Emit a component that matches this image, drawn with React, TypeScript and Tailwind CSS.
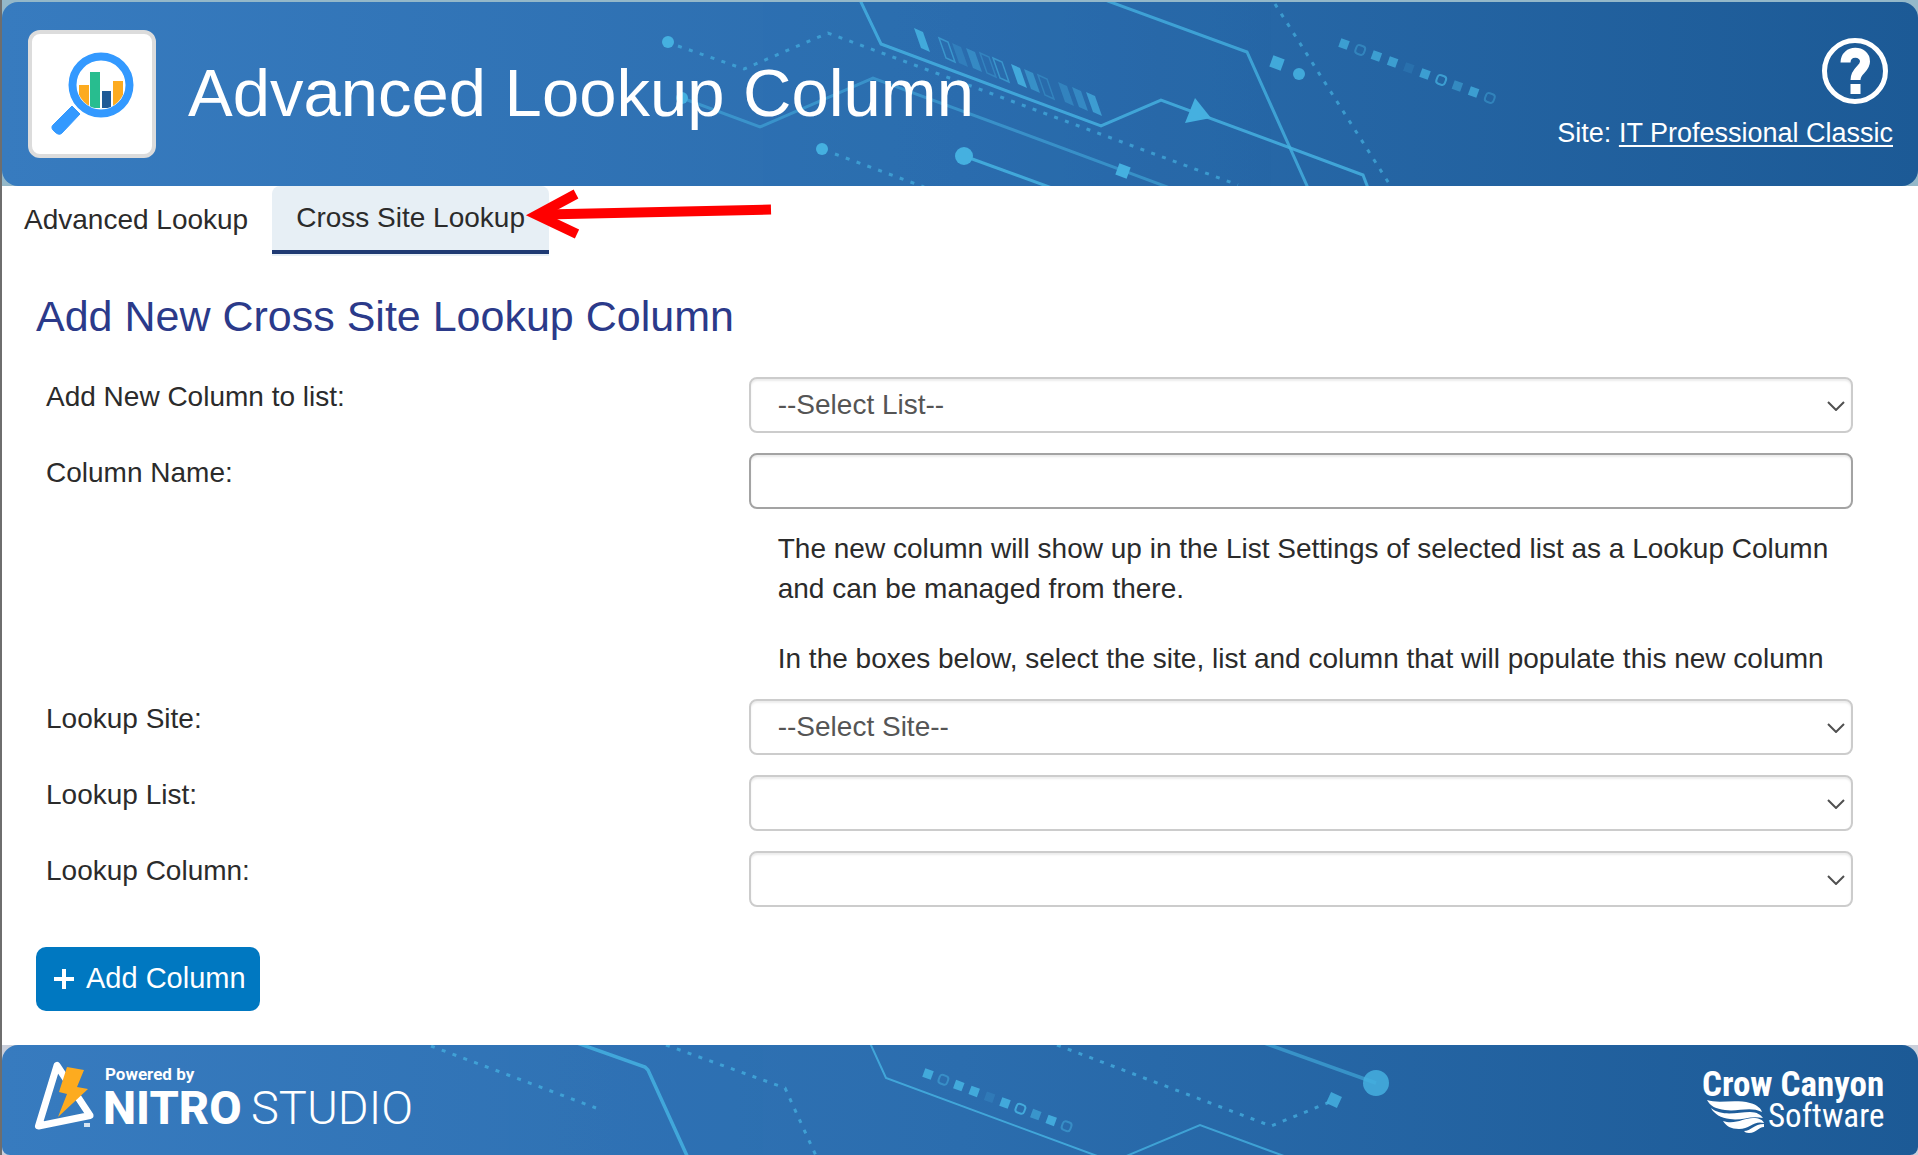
import { ReactNode } from "react";

const ACCENT = "#45b0e0";

// filled / outlined / faint blocks in the circuit drawing
const CHIPS = [1, 0, 1, 1, 2, 1, 0, 3, 1, 0];

function Chips({ x, y, dx, dy }: { x: number; y: number; dx: number; dy: number }) {
  return (
    <g>
      {CHIPS.map((kind, i) => (
        <rect
          key={i}
          x={-4.5}
          y={-4.5}
          width={9}
          height={9}
          rx={kind === 0 ? 3 : 0}
          transform={`translate(${x + i * dx} ${y + i * dy}) rotate(20)`}
          fill={kind === 0 ? "none" : ACCENT}
          stroke={kind === 0 ? ACCENT : "none"}
          strokeWidth={2}
          opacity={kind === 2 ? 0.2 : kind === 3 ? 0.6 : i === 1 || i === 9 ? 0.5 : 0.9}
        />
      ))}
    </g>
  );
}

const BARS = [
  [914, 28, 1],
  [939, 38, 0],
  [952, 43, 0.3],
  [966, 48, 0.5],
  [980, 53, -1],
  [993, 58, 0],
  [1011, 64, 1],
  [1024, 69, 0.6],
  [1038, 75, -1],
  [1058, 82, 0.4],
  [1072, 87, 0.5],
  [1086, 92, 0.8],
];

function HeaderArt() {
  return (
    <svg
      className="absolute inset-0 w-full h-full"
      viewBox="2 2 1916 184"
      preserveAspectRatio="xMidYMid slice"
      fill="none"
      stroke={ACCENT}
      strokeWidth={3}
      aria-hidden="true"
    >
      <path d="M860 0 881 44 1101 126 1161 100 1363 175 1368 188" opacity={0.85} />
      <path d="M1105 0 1247 52 1308 188" opacity={0.8} />
      <path d="M682 98 760 127 873 78 1170 188" opacity={0.55} />
      <path d="M964 156 1052 188" opacity={0.9} />
      <g strokeWidth={3} strokeDasharray="4 7.5" opacity={0.7}>
        <path d="M678 46 744 69 828 33 1238 185" />
        <path d="M835 154 924 187" />
        <path d="M1275 4 1390 185" />
      </g>
      {BARS.map(([x, y, o]) => (
        <path
          key={x}
          d={`M${x} ${y} l9 4 7 20 -9 -4z`}
          fill={o > 0 ? ACCENT : "none"}
          stroke={o > 0 ? "none" : ACCENT}
          strokeWidth={1.5}
          opacity={o > 0 ? o * 0.9 : o === 0 ? 0.6 : 0.35}
        />
      ))}
      <g fill={ACCENT} stroke="none">
        <circle cx={668} cy={42} r={6} />
        <circle cx={682} cy={98} r={6} />
        <circle cx={822} cy={149} r={6} />
        <circle cx={964} cy={156} r={9} />
        <circle cx={1299} cy={74} r={6} opacity={0.9} />
        <path d="M1195 98 1211 118 1185 123z" />
        <rect x={-6} y={-6} width={12} height={12} transform="translate(1123 171) rotate(20)" />
        <rect x={-6} y={-6} width={12} height={12} transform="translate(1277 63) rotate(20)" opacity={0.9} />
      </g>
      <g opacity={0.85}>
        <Chips x={1344} y={44} dx={16.2} dy={6} />
      </g>
    </svg>
  );
}

function FooterArt() {
  return (
    <svg
      className="absolute inset-0 w-full h-full"
      viewBox="2 1045 1916 110"
      preserveAspectRatio="xMidYMid slice"
      fill="none"
      stroke={ACCENT}
      strokeWidth={2}
      aria-hidden="true"
    >
      <path d="M577 1043 645 1067 648 1070 688 1158" strokeWidth={3.5} opacity={0.85} />
      <path d="M870 1043 886 1078 1100 1157" opacity={0.85} />
      <path d="M1124 1157 1200 1125 1284 1156" opacity={0.8} />
      <path d="M1264 1043 1376 1083" strokeWidth={3.5} opacity={0.6} />
      <g strokeWidth={3} strokeDasharray="4 7.5" opacity={0.75}>
        <path d="M431 1046 596 1108" />
        <path d="M666 1045 785 1088 817 1158" />
        <path d="M1057 1045 1271 1126 1330 1102" />
      </g>
      <g fill={ACCENT} stroke="none" opacity={0.85}>
        <circle cx={1376} cy={1083} r={13} />
        <rect x={-6} y={-6} width={12} height={12} transform="translate(1334 1100) rotate(25)" />
      </g>
      <Chips x={928} y={1074} dx={15.4} dy={5.8} />
    </svg>
  );
}

function AppIcon() {
  return (
    <div className="w-32 h-32 shrink-0 rounded-xl bg-white border-4 border-[#dcdcdc] flex items-center justify-center">
      <svg viewBox="28 30 128 128" className="w-32 h-32 shrink-0" aria-hidden="true">
        <defs>
          <clipPath id="lens">
            <circle cx={101} cy={85} r={24} />
          </clipPath>
        </defs>
        <g clipPath="url(#lens)">
          <rect x={79} y={85} width={10} height={30} fill="#fdab1f" />
          <rect x={90} y={72} width={10} height={36} fill="#28bd8f" />
          <rect x={102} y={91} width={9} height={17} fill="#1f5a96" />
          <rect x={113} y={81} width={10} height={30} fill="#fdab1f" />
        </g>
        <circle cx={101} cy={85} r={28.5} fill="none" stroke="#3399ff" strokeWidth={8} />
        <path d="M72 106 80 114 62 133Q59 136 55 132 50 128 53 125z" fill="#3399ff" stroke="#3399ff" strokeWidth={1} />
      </svg>
    </div>
  );
}

function HelpIcon() {
  return (
    <svg viewBox="0 0 68 68" className="w-17 h-17" fill="none" stroke="white" aria-hidden="true">
      <circle cx={34} cy={34} r={30.5} strokeWidth={5} />
      <path d="M24.5 25.5C24.5 12.5 44 13 44 24.5 44 32.5 34.5 33 34.5 43" strokeWidth={10} />
      <path d="M34.5 47V57" strokeWidth={10} />
    </svg>
  );
}

function NitroLogo() {
  return (
    <svg viewBox="32 1059 392 90" className="w-[392px] h-[90px]" role="img" aria-label="Powered by Nitro Studio">
      <path d="M57 1065.5 38.5 1126 90 1115.5z" fill="none" stroke="white" strokeWidth={7} strokeLinejoin="round" />
      <path d="M67 1067 84 1070 77 1087 88 1089 58 1117 67 1094 59 1092z" fill="#fdab1f" />
      <rect x={84} y={1123} width={6} height={4} fill="white" opacity={0.8} />
      <text x={105} y={1080} fontSize={17} fontWeight={700} fill="white" fontFamily="Roboto, sans-serif">
        Powered by
      </text>
      <text x={103} y={1124} fontSize={47} fontWeight={800} fill="white" fontFamily="Roboto, sans-serif">
        NITRO
      </text>
      <text x={251} y={1124} fontSize={47} fontWeight={300} fill="white" fontFamily="Roboto, sans-serif">
        STUDIO
      </text>
    </svg>
  );
}

function CrowCanyonLogo() {
  return (
    <svg viewBox="1700 1062 190 80" className="w-[190px] h-[80px]" role="img" aria-label="Crow Canyon Software">
      <text
        x={1702}
        y={1096}
        fontSize={35}
        fontWeight={700}
        fill="white"
        fontFamily="'Liberation Sans Narrow', 'Roboto Condensed', sans-serif"
      >
        Crow Canyon
      </text>
      <text
        x={1768}
        y={1127}
        fontSize={33}
        fill="white"
        fontFamily="'Liberation Sans Narrow', 'Roboto Condensed', sans-serif"
      >
        Software
      </text>
      <g fill="white">
        <path d="M1707 1100C1718 1104 1735 1099 1750 1103 1758 1105 1761 1109 1762 1112 1750 1106 1738 1112 1725 1110 1716 1109 1710 1106 1707 1100z" />
        <path d="M1711 1108C1722 1117 1738 1112 1750 1112 1757 1112 1761 1115 1763 1118 1750 1115 1742 1121 1730 1119 1721 1118 1714 1114 1711 1108z" />
        <path d="M1723 1121C1735 1125 1744 1118 1753 1118 1759 1118 1763 1120 1764 1123 1754 1120 1750 1129 1739 1129 1731 1129 1726 1126 1723 1121z" />
        <path d="M1744 1131C1751 1131 1754 1124 1764 1124V1127C1758 1127 1757 1133 1749 1133 1746 1133 1745 1132 1744 1131z" />
      </g>
    </svg>
  );
}

function Row({ id, label, children }: { id: string; label: string; children: ReactNode }) {
  return (
    <div className="grid grid-cols-[7fr_11fr]">
      <label htmlFor={id} className="self-start leading-10">
        {label}
      </label>
      {children}
    </div>
  );
}

function Select({ id, placeholder }: { id: string; placeholder?: string }) {
  return (
    <div className="relative">
      <select
        id={id}
        className="appearance-none block w-full h-14 pl-[27px] pr-12 rounded-lg border-2 border-[#cccccc] bg-white text-[#555555] shadow-[inset_0_2px_2px_rgba(0,0,0,0.08)]"
      >
        <option>{placeholder}</option>
      </select>
      <svg
        viewBox="0 0 18 10"
        className="absolute right-2 top-6 w-[18px] h-[10px] pointer-events-none"
        fill="none"
        stroke="#505050"
        strokeWidth={2}
        aria-hidden="true"
      >
        <path d="M1 1 9 9 17 1" />
      </svg>
    </div>
  );
}

export default function App() {
  return (
    <div className="min-h-screen flex flex-col bg-white border-l-2 border-[#6e6e6e] font-['Liberation_Sans',Arial,sans-serif] text-[28px] text-[#2b2b2b]">
      <header className="bg-[#94b8c9] pt-[2px]">
        <div className="relative h-[184px] rounded-2xl overflow-hidden bg-linear-to-r from-[#377bbf] via-[#2b6dae] to-[#1c5a96]">
          <HeaderArt />
          <div className="relative h-full flex items-center justify-between pl-[26px] pr-[25px] text-white">
            <div className="flex items-center gap-8">
              <AppIcon />
              <h1 className="pb-1 text-[67px] leading-none">Advanced Lookup Column</h1>
            </div>
            <div className="flex flex-col items-end gap-2 pt-[2px]">
              <button className="mr-1" aria-label="Help">
                <HelpIcon />
              </button>
              <p className="text-[27px] leading-10">
                Site:{" "}
                <a href="#" className="underline underline-offset-3">
                  IT Professional Classic
                </a>
              </p>
            </div>
          </div>
        </div>
      </header>

      <nav className="relative flex items-start gap-[2px] h-[70px]">
        <button className="h-[68px] px-[22px]">Advanced Lookup</button>
        <div className="bg-[#e7eff5] rounded-t-lg pb-[2px]">
          <button className="block h-[68px] px-6 border-b-4 border-[#1f3a73]">Cross Site Lookup</button>
        </div>
        {/* pointer to the active tab */}
        <svg
          viewBox="524 186 250 54"
          className="absolute left-[522px] top-0 w-[250px] h-[54px]"
          fill="none"
          stroke="#ff0000"
          strokeWidth={10}
          aria-hidden="true"
        >
          <path d="M545 214.5 771 209.5" />
          <path d="M576 194 537 215 577 234" />
        </svg>
      </nav>

      <main className="flex-auto pl-[34px] pr-[65px] pt-[34px]">
        <h2 className="text-[43px] leading-[52px] text-[#2b3a8a]">Add New Cross Site Lookup Column</h2>
        <form className="pt-[35px]">
          <div className="flex flex-col gap-5 pl-[10px]">
            <Row id="list" label="Add New Column to list:">
              <Select id="list" placeholder="--Select List--" />
            </Row>
            <Row id="name" label="Column Name:">
              <input
                id="name"
                type="text"
                className="block w-full h-14 px-[27px] rounded-lg border-2 border-[#a3a3a3] shadow-[inset_0_2px_2px_rgba(0,0,0,0.08)]"
              />
            </Row>
            <div className="grid grid-cols-[7fr_11fr]">
              <div className="col-start-2 flex flex-col gap-[30px] pl-[29px] leading-10">
                <p>
                  The new column will show up in the List Settings of selected list as a Lookup Column and can be
                  managed from there.
                </p>
                <p>In the boxes below, select the site, list and column that will populate this new column</p>
              </div>
            </div>
            <Row id="site" label="Lookup Site:">
              <Select id="site" placeholder="--Select Site--" />
            </Row>
            <Row id="lookup-list" label="Lookup List:">
              <Select id="lookup-list" />
            </Row>
            <Row id="lookup-column" label="Lookup Column:">
              <Select id="lookup-column" />
            </Row>
          </div>
          <button
            type="button"
            className="mt-10 mb-[34px] h-16 pl-[18px] pr-[14px] flex items-center gap-3 rounded-[10px] bg-[#0078c1] text-white text-[29px]"
          >
            <svg viewBox="0 0 20 20" className="w-5 h-5" stroke="white" strokeWidth={4} aria-hidden="true">
              <path d="M10 0V20M0 10H20" />
            </svg>
            Add Column
          </button>
        </form>
      </main>

      <footer className="bg-[#c9cfdb]">
        <div className="relative h-[110px] rounded-t-2xl rounded-b-lg overflow-hidden bg-linear-to-r from-[#377bbf] via-[#2b6dae] to-[#1c5a96]">
          <FooterArt />
          <div className="relative flex items-start justify-between pl-[30px] pr-[28px] pt-[14px]">
            <NitroLogo />
            <div className="pt-[3px]">
              <CrowCanyonLogo />
            </div>
          </div>
        </div>
      </footer>
    </div>
  );
}
